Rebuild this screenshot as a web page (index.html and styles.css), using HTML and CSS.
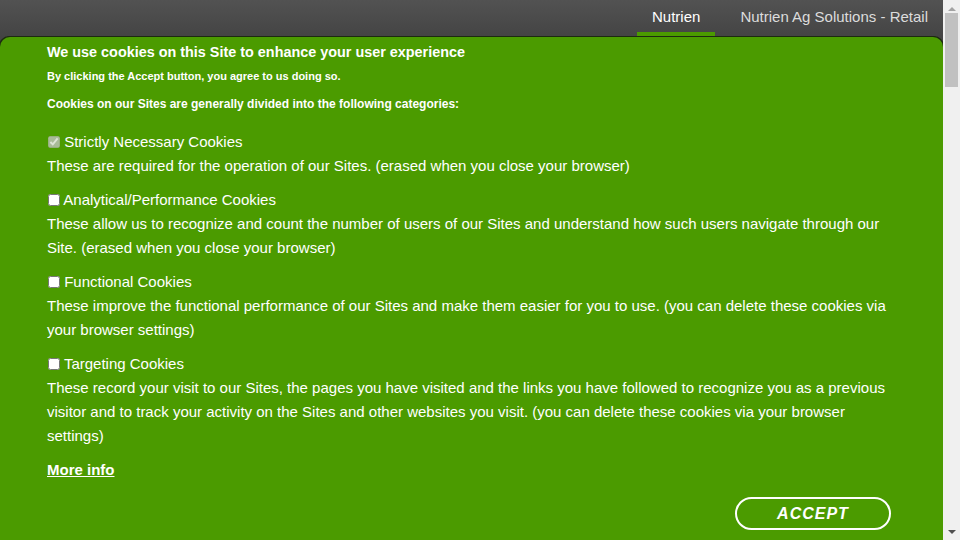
FILE: index.html
```html
<!DOCTYPE html>
<html>
<head>
    <title>Nutrien</title>
    <meta charset="utf-8">
    <link rel="stylesheet" href="styles.css">
</head>
<body>
<div class="page">
    <div class="main">
        <header class="topbar">
            <nav class="sites">
                <a class="site active" href="#">Nutrien</a>
                <a class="site" href="#">Nutrien Ag Solutions - Retail</a>
            </nav>
        </header>

        <div class="cookie-panel">
            <h2>We use cookies on this Site to enhance your user experience</h2>
            <p class="small">By clicking the Accept button, you agree to us doing so.</p>
            <p class="intro">Cookies on our Sites are generally divided into the following categories:</p>

            <div class="category">
                <label><input type="checkbox" checked disabled> Strictly Necessary Cookies</label>
                <p>These are required for the operation of our Sites. (erased when you close your browser)</p>
            </div>
            <div class="category">
                <label><input type="checkbox"> Analytical/Performance Cookies</label>
                <p>These allow us to recognize and count the number of users of our Sites and understand how such users navigate through our Site. (erased when you close your browser)</p>
            </div>
            <div class="category">
                <label><input type="checkbox"> Functional Cookies</label>
                <p>These improve the functional performance of our Sites and make them easier for you to use. (you can delete these cookies via your browser settings)</p>
            </div>
            <div class="category">
                <label><input type="checkbox"> Targeting Cookies</label>
                <p>These record your visit to our Sites, the pages you have visited and the links you have followed to recognize you as a previous visitor and to track your activity on the Sites and other websites you visit. (you can delete these cookies via your browser settings)</p>
            </div>

            <a class="more" href="#">More info</a>

            <div class="actions">
                <button class="accept">ACCEPT</button>
            </div>
        </div>
    </div>

    <div class="scrollbar">
        <span class="arrow up"></span>
        <span class="thumb"></span>
        <span class="track"></span>
        <span class="arrow down"></span>
    </div>
</div>
</body>
</html>
```

FILE: styles.css
```css
html,body{
    padding: 0;
    margin: 0;
    height: 100%;
    overflow: hidden;
    font-family: "Liberation Sans", Arial, sans-serif;
}

.page{
    display: flex;
    height: 540px;
    background: #464646;
}

.main{
    flex: 1;
    display: flex;
    flex-direction: column;
    background: linear-gradient(#525252, #444444 37px);
}

.topbar{
    height: 37px;
    display: flex;
    justify-content: flex-end;
}

.sites{
    display: flex;
}

.site{
    display: block;
    height: 32px;
    line-height: 34px;
    padding: 0 15px;
    margin-left: 10px;
    font-size: 15px;
    color: #dcdcdc;
    text-decoration: none;
    border-bottom: 5px solid transparent;
}

.site.active{
    color: #fff;
    border-bottom-color: #4b9b00;
}

.cookie-panel{
    flex: 1;
    background: #4b9b00;
    border-radius: 10px 10px 0 0;
    box-shadow: -1px -1px 0 #1d2a10, 1px -1px 0 #1d2a10;
    padding: 5px 47px 0;
    color: #fff;
}

.cookie-panel h2{
    margin: 0;
    font-size: 14.4px;
    line-height: 20px;
    font-weight: bold;
}

.small{
    margin: 7px 0 0;
    font-size: 11px;
    line-height: 14px;
    font-weight: bold;
}

.intro{
    margin: 13px 0 0;
    font-size: 12px;
    line-height: 16px;
    font-weight: bold;
}

.category{
    margin-top: 10px;
    font-size: 15px;
    line-height: 24px;
}

.category:first-of-type{
    margin-top: 18px;
}

.category label{
    display: block;
}

.category input{
    width: 12px;
    height: 12px;
    margin: 0 0 0 1px;
    vertical-align: -1px;
}

.category p{
    margin: 0;
}

.more{
    display: inline-block;
    margin-top: 10px;
    font-size: 15px;
    line-height: 24px;
    font-weight: bold;
    color: #fff;
}

.actions{
    display: flex;
    justify-content: flex-end;
    margin-top: 15px;
    padding-right: 5px;
}

.accept{
    width: 156px;
    height: 33px;
    background: transparent;
    border: 2px solid #fff;
    border-radius: 17px;
    color: #fff;
    font-family: "Liberation Sans", Arial, sans-serif;
    font-size: 16px;
    font-weight: bold;
    font-style: italic;
    letter-spacing: 1px;
}

.scrollbar{
    width: 17px;
    display: flex;
    flex-direction: column;
    align-items: center;
    background: #f0f0f0;
}

.scrollbar .thumb{
    width: 13px;
    height: 74px;
    background: #c1c1c1;
    margin-top: 2px;
}

.scrollbar .track{
    flex: 1;
}

.arrow{
    width: 0;
    height: 0;
    border-left: 4px solid transparent;
    border-right: 4px solid transparent;
}

.arrow.up{
    margin-top: 7px;
    border-bottom: 4px solid #a3a3a3;
}

.arrow.down{
    margin-bottom: 6px;
    border-top: 4px solid #505050;
}
```
